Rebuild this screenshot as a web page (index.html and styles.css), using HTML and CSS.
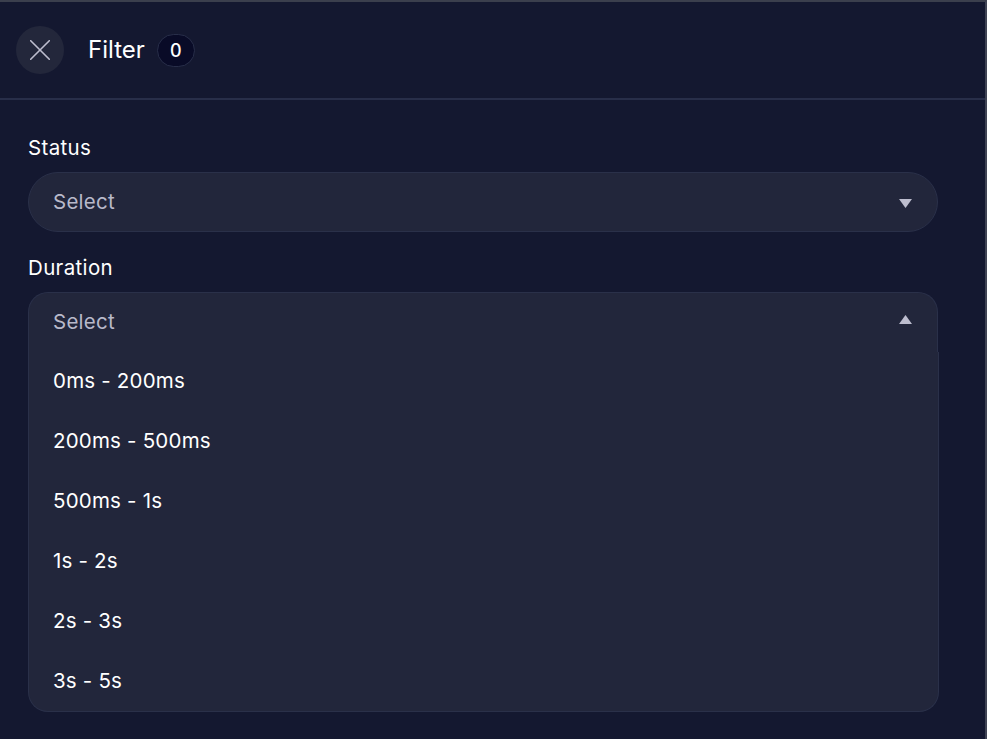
FILE: index.html
```html
<!DOCTYPE html>
<html lang="en">
<head>
<meta charset="UTF-8" />
<title>Filter</title>
<link rel="stylesheet" href="styles.css">
</head>
<body>

<div class="panel">
  <header class="header">
    <button class="close" aria-label="Close">
      <svg width="20" height="20" viewBox="0 0 20 20"><path d="M0.7 0.7 19.3 19.3M19.3 0.7 0.7 19.3" /></svg>
    </button>
    <h1>Filter</h1>
    <span class="count">0</span>
  </header>

  <main class="filters">
    <div class="label">Status</div>
    <div class="select">
      <span>Select</span>
      <svg class="arrow" width="13" height="9" viewBox="0 0 13 9"><path d="M0 0h13L6.5 9z" /></svg>
    </div>

    <div class="label">Duration</div>
    <div class="select open">
      <span>Select</span>
      <svg class="arrow" width="13" height="9" viewBox="0 0 13 9"><path d="M0 9h13L6.5 0z" /></svg>
    </div>
    <ul class="options">
      <li>0ms - 200ms</li>
      <li>200ms - 500ms</li>
      <li>500ms - 1s</li>
      <li>1s - 2s</li>
      <li>2s - 3s</li>
      <li>3s - 5s</li>
    </ul>
  </main>
</div>

</body>
</html>
```
FILE: styles.css
```css
* { box-sizing: border-box; }
body { margin: 0; background: #141830; color: #fff; font-family: Inter, "Liberation Sans", sans-serif; font-size: 20.5px; letter-spacing: 0.2px; }
.panel { height: 739px; border-top: 2px solid #3b3f4d; border-right: 2px solid #3f4354; overflow: hidden; }
.header { display: flex; align-items: center; height: 98px; padding: 0 16px; border-bottom: 2px solid #282e49; }
.close { display: flex; align-items: center; justify-content: center; width: 48px; height: 48px; padding: 0; border: none; border-radius: 50%; background: #23273b; cursor: pointer; }
.close svg { fill: none; stroke: #bdbdce; stroke-width: 1.6; stroke-linecap: round; }
h1 { margin: 0 12px 0 24px; font-size: 24px; font-weight: 400; line-height: 48px; letter-spacing: 0; }
.count { width: 38px; height: 33px; border: 1px solid #282e49; border-radius: 17px; background: #090b27; font-size: 18px; font-weight: 500; line-height: 32px; letter-spacing: 0; text-align: center; }
.filters { padding: 32px 47px 0 28px; }
.label { height: 40px; line-height: 32px; letter-spacing: 0.35px; }
.select { display: flex; align-items: center; justify-content: space-between; height: 60px; margin-bottom: 20px; padding: 0 25px 0 24px; border: 1px solid #2a3049; border-radius: 30px; background: #22263b; color: #b8b9ca; line-height: 58px; letter-spacing: 0.25px; }
.select.open { margin-bottom: 0; padding-bottom: 2px; border-bottom: none; border-radius: 20px 20px 0 0; }
.arrow { margin-top: 2px; fill: #bdbdce; }
.open .arrow { margin: 0 0 4px; }
.options { margin: 0 -1px 0 0; padding: 0; height: 360px; border: 1px solid #2a3049; border-top: none; border-radius: 0 0 20px 20px; background: #22263b; list-style: none; }
.options li { height: 60px; padding-left: 24px; line-height: 58px; }
```
